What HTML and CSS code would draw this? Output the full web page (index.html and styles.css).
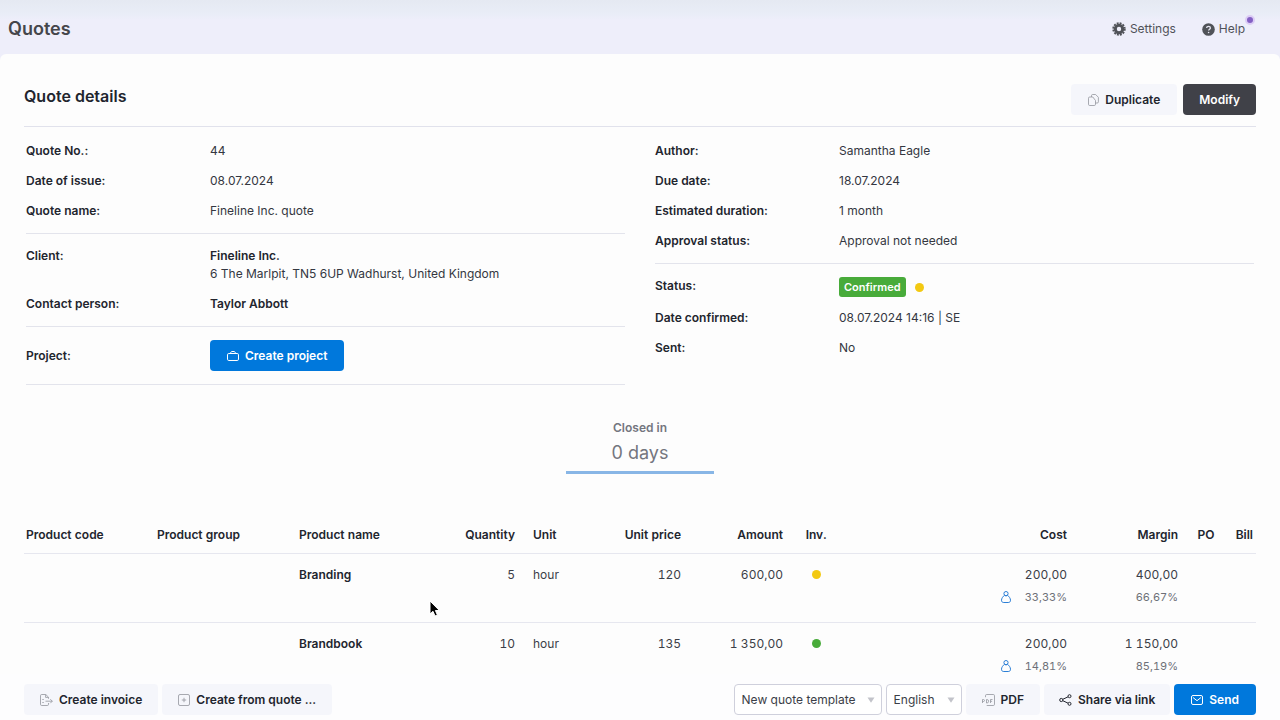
FILE: index.html
```html
<!DOCTYPE html>
<html lang="en">
<head>
  <meta charset="utf-8">
  <title>Quotes</title>
  <meta name="viewport" content="width=device-width, initial-scale=1">
  <link rel="stylesheet" href="styles.css">
</head>
<body>

  <header class="topbar">
    <h1>Quotes</h1>
    <nav>
      <a href="#settings">
        <svg width="14" height="14" viewBox="0 0 14 14"><circle cx="7" cy="7" r="3.7" fill="none" stroke="currentColor" stroke-width="3"/><circle cx="7" cy="7" r="5.8" fill="none" stroke="currentColor" stroke-width="1.8" stroke-dasharray="1.9 1.137"/></svg>
        Settings
      </a>
      <a href="#help" class="help">
        <svg width="13" height="13" viewBox="0 0 13 13"><circle cx="6.5" cy="6.5" r="6.3" fill="currentColor"/><path d="M4.7 5.1c0-1.1.8-1.8 1.9-1.8s1.8.7 1.8 1.6c0 1.2-1.8 1.4-1.8 2.7" fill="none" stroke="#e6e6f2" stroke-width="1.3"/><circle cx="6.6" cy="9.5" r=".8" fill="#e6e6f2"/></svg>
        Help
        <span class="notice"></span>
      </a>
    </nav>
  </header>

  <main>
    <div class="title">
      <h2>Quote details</h2>
      <div class="buttons">
        <button type="button" class="btn">
          <svg width="11" height="12" viewBox="0 0 11 12" class="thin"><path d="M3.5 3V1.700C3.500.9 3.900.5 4.600.5h3l2.800 2.800v4.500c0 .8-.4 1.200-1.200 1.200H7.500"/><path d="M3.500 3H1.700C.9 3 .5 3.400.5 4.200v6.100c0 .8.4 1.200 1.200 1.200h4.600c.8 0 1.200-.4 1.200-1.200V6.500L4.800 3z"/></svg>
          Duplicate
        </button>
        <button type="button" class="btn dark">Modify</button>
      </div>
    </div>

    <div class="details">
      <div class="column">
        <dl>
          <div><dt>Quote No.:</dt><dd>44</dd></div>
          <div><dt>Date of issue:</dt><dd>08.07.2024</dd></div>
          <div><dt>Quote name:</dt><dd>Fineline Inc. quote</dd></div>
        </dl>
        <dl>
          <div><dt>Client:</dt><dd><b>Fineline Inc.</b><br>6 The Marlpit, TN5 6UP Wadhurst, United Kingdom</dd></div>
          <div><dt>Contact person:</dt><dd><b>Taylor Abbott</b></dd></div>
        </dl>
        <dl>
          <div>
            <dt>Project:</dt>
            <dd>
              <button type="button" class="btn blue">
                <svg width="12" height="10" viewBox="0 0 12 10" class="line"><rect x=".5" y="2.500" width="11" height="7" rx="1.300"/><path d="M3.500 2.400c.2-1.300.8-1.900 1.500-1.900h2c.7 0 1.300.6 1.500 1.900"/></svg>
                Create project
              </button>
            </dd>
          </div>
        </dl>
      </div>
      <div class="column">
        <dl>
          <div><dt>Author:</dt><dd>Samantha Eagle</dd></div>
          <div><dt>Due date:</dt><dd>18.07.2024</dd></div>
          <div><dt>Estimated duration:</dt><dd>1 month</dd></div>
          <div><dt>Approval status:</dt><dd>Approval not needed</dd></div>
        </dl>
        <dl>
          <div><dt>Status:</dt><dd class="status"><span class="badge">Confirmed</span><span class="dot yellow"></span></dd></div>
          <div><dt>Date confirmed:</dt><dd>08.07.2024 14:16 | SE</dd></div>
          <div><dt>Sent:</dt><dd>No</dd></div>
        </dl>
      </div>
    </div>

    <div class="closed">
      <b>Closed in</b>
      <span>0 days</span>
    </div>

    <table>
      <colgroup>
        <col class="c-code"><col class="c-group"><col class="c-name"><col class="c-qty"><col class="c-unit"><col class="c-price">
        <col class="c-amount"><col class="c-inv"><col><col class="c-margin"><col class="c-po"><col class="c-bill">
      </colgroup>
      <thead>
        <tr>
          <th>Product code</th>
          <th>Product group</th>
          <th>Product name</th>
          <th class="num">Quantity</th>
          <th>Unit</th>
          <th class="num">Unit price</th>
          <th class="num">Amount</th>
          <th class="mid">Inv.</th>
          <th class="num">Cost</th>
          <th class="num">Margin</th>
          <th class="mid">PO</th>
          <th class="num">Bill</th>
        </tr>
      </thead>
      <tbody>
        <tr>
          <td></td>
          <td></td>
          <td><b>Branding</b></td>
          <td class="num">5</td>
          <td>hour</td>
          <td class="num">120</td>
          <td class="num">600,00</td>
          <td class="mid"><span class="dot yellow"></span></td>
          <td class="num">200,00
            <div class="sub"><svg width="10" height="12" viewBox="0 0 10 12" class="person"><circle cx="5" cy="2.600" r="2.100"/><path d="M3.500 4.300C2 5.300.5 7.400.5 9.200c0 1.600.8 2.300 2.300 2.300h4.400c1.500 0 2.300-.7 2.300-2.300 0-1.800-1.500-3.900-3-4.900-.7.700-2.300.7-3 0z"/></svg>33,33%</div>
          </td>
          <td class="num">400,00<div class="sub">66,67%</div></td>
          <td></td>
          <td></td>
        </tr>
        <tr>
          <td></td>
          <td></td>
          <td><b>Brandbook</b></td>
          <td class="num">10</td>
          <td>hour</td>
          <td class="num">135</td>
          <td class="num">1 350,00</td>
          <td class="mid"><span class="dot green"></span></td>
          <td class="num">200,00
            <div class="sub"><svg width="10" height="12" viewBox="0 0 10 12" class="person"><circle cx="5" cy="2.600" r="2.100"/><path d="M3.500 4.300C2 5.300.5 7.400.5 9.200c0 1.600.8 2.300 2.300 2.300h4.400c1.500 0 2.300-.7 2.300-2.300 0-1.800-1.500-3.900-3-4.900-.7.700-2.300.7-3 0z"/></svg>14,81%</div>
          </td>
          <td class="num">1 150,00<div class="sub">85,19%</div></td>
          <td></td>
          <td></td>
        </tr>
      </tbody>
    </table>
  </main>

  <footer class="actions">
    <div class="buttons">
      <button type="button" class="btn">
        <svg width="13" height="12" viewBox="0 0 13 12" class="thin"><path d="M8.500 9v1.300c0 .8-.4 1.200-1.200 1.200H1.700c-.8 0-1.200-.4-1.200-1.200V1.700C.5.900.9.5 1.700.5h4.100l2.700 2.700v1.600M5.600.6v2.800h2.800M2.300 5.500h1.500M2.300 8.500h1.500M5.500 7.200h6.800M10.300 5.200l2 2-2 2"/></svg>
        Create invoice
      </button>
      <button type="button" class="btn">
        <svg width="12" height="12" viewBox="0 0 12 12" class="thin"><rect x=".5" y=".5" width="11" height="11" rx="1.500"/><path d="M6 3.800v4.400M3.800 6h4.400"/></svg>
        Create from quote ...
      </button>
    </div>
    <div class="buttons">
      <span class="select wide">
        <select aria-label="Template"><option>New quote template</option></select>
        <svg width="8" height="6" viewBox="0 0 8 6"><path d="M.5.500h7L4 5.700z"/></svg>
      </span>
      <span class="select">
        <select aria-label="Language"><option>English</option></select>
        <svg width="8" height="6" viewBox="0 0 8 6"><path d="M.5.500h7L4 5.700z"/></svg>
      </span>
      <button type="button" class="btn">
        <svg width="13" height="12" viewBox="0 0 13 12" class="thin"><path d="M3.500 3.200V1.700c0-.8.4-1.200 1.200-1.200h6.600c.8 0 1.200.4 1.200 1.200v8.600c0 .8-.4 1.200-1.200 1.200H4.700"/><path d="M.5 9V5.500h1c1.300 0 1.300 2 0 2h-1M4.500 9V5.500h.6c2 0 2 3.500 0 3.500zM8.500 9V5.500h2M8.500 7.300h1.600"/></svg>
        PDF
      </button>
      <button type="button" class="btn share">
        <svg width="13" height="12" viewBox="0 0 13 12" class="line"><circle cx="2.300" cy="6" r="1.600"/><circle cx="10.500" cy="2.200" r="1.500"/><circle cx="10.500" cy="9.800" r="1.500"/><path d="M3.800 5.300l5.300-2.500M3.800 6.700l5.300 2.500"/></svg>
        Share via link
      </button>
      <button type="button" class="btn blue">
        <svg width="12" height="10" viewBox="0 0 12 10" class="line"><rect x=".5" y=".5" width="11" height="9" rx="1.500"/><path d="M2 2.500l4 3.200 4-3.200"/></svg>
        Send
      </button>
    </div>
  </footer>

  <svg class="cursor" width="14" height="18" viewBox="0 0 14 18"><path d="M1 1v13l3-2.700 2 4.700 2.400-1-2-4.500h4z" fill="#000" stroke="#fff"/></svg>

</body>
</html>
```
FILE: styles.css
```css
* { box-sizing: border-box; }

body {
  margin: 0;
  height: 100vh;
  display: flex;
  flex-direction: column;
  background: #eeeefa;
  color: #22252e;
  font: 12px/18px Inter, "Liberation Sans", sans-serif;
}

h1, h2, dl, dd { margin: 0; }
h1 { font-size: 18px; line-height: 24px; font-weight: 600; color: #45464b; }
h2 { font-size: 16px; line-height: 24px; font-weight: 600; }
b, dt, th { font-weight: 600; }
svg { display: block; flex: none; }

.line, .thin, .person { fill: none; stroke: currentColor; stroke-width: 1; }
.thin { color: #93959d; stroke-width: .8; }
.person { color: #2c7fd6; }

/* top bar */
.topbar {
  flex: none;
  display: flex;
  justify-content: space-between;
  align-items: center;
  height: 54px;
  padding: 4px 35px 0 8px;
  background: linear-gradient(#e5e9f2, #e9edf7 14px, #eeeefa 20px);
}
.topbar nav { display: flex; gap: 26px; }
.topbar a {
  display: flex;
  align-items: center;
  gap: 4px;
  color: #505258;
  font-size: 12px;
  text-decoration: none;
}
.help { position: relative; }
.notice {
  position: absolute;
  top: -5px;
  right: -10px;
  width: 10px;
  height: 10px;
  border: 2px solid #dccdf5;
  border-radius: 50%;
  background: #8460c4;
}

/* quote */
main {
  flex: 1;
  min-height: 0;
  overflow: auto;
  scrollbar-width: none;
  padding: 0 24px;
  border-radius: 6px 6px 0 0;
  background: #fdfdfd;
}
.title {
  display: flex;
  justify-content: space-between;
  padding: 30px 0 11px;
  border-bottom: 1px solid #e1e2ec;
}
.buttons { display: flex; gap: 5px; }

.btn {
  display: flex;
  align-items: center;
  gap: 6px;
  height: 31px;
  padding: 0 16px;
  border: 0;
  border-radius: 4px;
  background: #f5f6fb;
  color: #22252e;
  font: 600 12px/18px Inter, "Liberation Sans", sans-serif;
}
.btn.dark { background: #404148; color: #fff; }
.btn.blue { padding: 0 17px; background: #0078dc; color: #fff; }
.btn.share { padding: 0 15px; }
.title .buttons { gap: 6px; }
.title .btn { padding: 0 17px; }
.title .btn.dark { padding: 0 16px; }

.details {
  display: grid;
  grid-template-columns: 1fr 1fr;
  gap: 30px;
  padding: 2px 2px 0;
}
dl {
  display: flex;
  flex-direction: column;
  gap: 12px;
  padding: 13px 0;
  border-bottom: 1px solid #e3e4ec;
}
dd { color: #343741; }
dd b { color: #22252e; }
.column:last-child dl:last-child { border: 0; }
dl > div { display: grid; grid-template-columns: 184px 1fr; align-items: start; }
dl > div:has(.btn) { align-items: center; }
.status { display: flex; align-items: center; gap: 9px; }
.badge {
  padding: 1px 5px;
  border-radius: 3px;
  background: #48ab3a;
  color: #fff;
  font-size: 11px;
  font-weight: 600;
}
.dot { display: inline-block; width: 9px; height: 9px; border-radius: 50%; }
.yellow { background: #f3c912; }
.green { background: #48ab3a; }

.closed {
  display: flex;
  flex-direction: column;
  align-items: center;
  gap: 2px;
  width: 148px;
  margin: 34px auto 0;
  padding-bottom: 4px;
  border-bottom: 3px solid #88b6e6;
  color: #74767f;
}
.closed span { font-size: 18px; line-height: 28px; }

/* products */
table {
  width: 100%;
  margin-top: 45px;
  border-collapse: collapse;
  table-layout: fixed;
  font-variant-numeric: tabular-nums;
}
th, td { padding: 12px 9px; text-align: left; vertical-align: top; border-bottom: 1px solid #e6e7ef; }
th { padding: 7px 9px 9px; white-space: nowrap; }
tr > :first-child { padding-left: 2px; }
tr > :last-child { padding-right: 3px; }
td { height: 69px; color: #3b3e47; }
td b { color: #22252e; }
.num { text-align: right; }
.mid { text-align: center; padding-left: 0; padding-right: 0; }
.sub {
  display: flex;
  justify-content: flex-end;
  align-items: center;
  gap: 14px;
  margin-top: 4px;
  font-size: 11px;
  color: #6d7078;
}
.c-code { width: 124px; }
.c-group { width: 142px; }
.c-name { width: 134px; }
.c-qty { width: 100px; }
.c-unit { width: 66px; }
.c-price { width: 100px; }
.c-amount { width: 102px; }
.c-inv { width: 48px; }
.c-margin { width: 111px; }
.c-po { width: 38px; }
.c-bill { width: 31px; }

/* bottom bar */
.actions {
  flex: none;
  display: flex;
  justify-content: space-between;
  padding: 10px 24px 5px;
  background: #fdfdfe;
}
.actions .buttons { gap: 4px; }
.select { display: grid; align-items: center; width: 76px; }
.select.wide { width: 148px; }
.select select {
  grid-area: 1 / 1;
  appearance: none;
  width: 100%;
  height: 31px;
  padding: 0 7px;
  border: 1px solid #cfd0dc;
  border-radius: 4px;
  background: #fff;
  color: #3b3e47;
  font: 12px/18px Inter, "Liberation Sans", sans-serif;
}
.select svg {
  grid-area: 1 / 1;
  justify-self: end;
  margin-right: 7px;
  fill: #c2c3ca;
  pointer-events: none;
}

.cursor { position: absolute; left: 429px; top: 600px; }
```
